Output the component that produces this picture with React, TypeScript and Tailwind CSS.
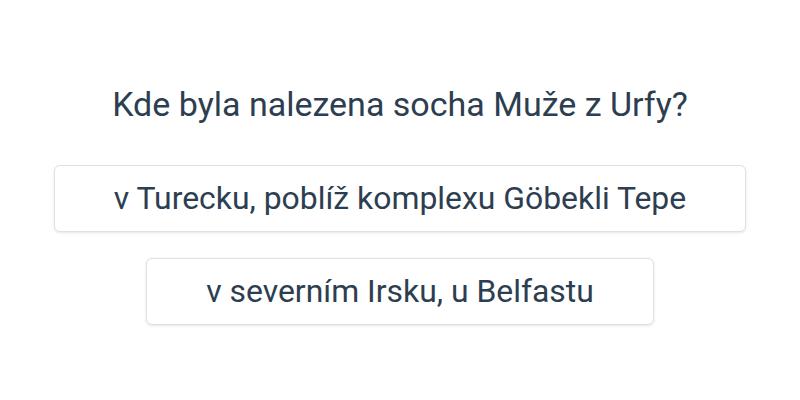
export default function App() {
  const answers = [
    "v Turecku, poblíž komplexu Göbekli Tepe",
    "v severním Irsku, u Belfastu",
  ];

  return (
    <div className="w-[800px] h-[400px] bg-white flex flex-col items-center pt-[84px] font-['Roboto',sans-serif] text-[#2c3e50]">
      <h1 className="text-[34px] leading-[40px] font-normal mb-[41px]">
        Kde byla nalezena socha Muže z Urfy?
      </h1>
      <div className="flex flex-col items-center gap-[26px]">
        {answers.map((a, i) => (
          <button
            key={i}
            className="px-[59px] h-[67px] text-[31.9px] leading-none bg-white border border-[#e0e0e0] rounded-[6px] shadow-[0_1px_3px_rgba(0,0,0,0.1)]"
          >
            {a}
          </button>
        ))}
      </div>
    </div>
  );
}
